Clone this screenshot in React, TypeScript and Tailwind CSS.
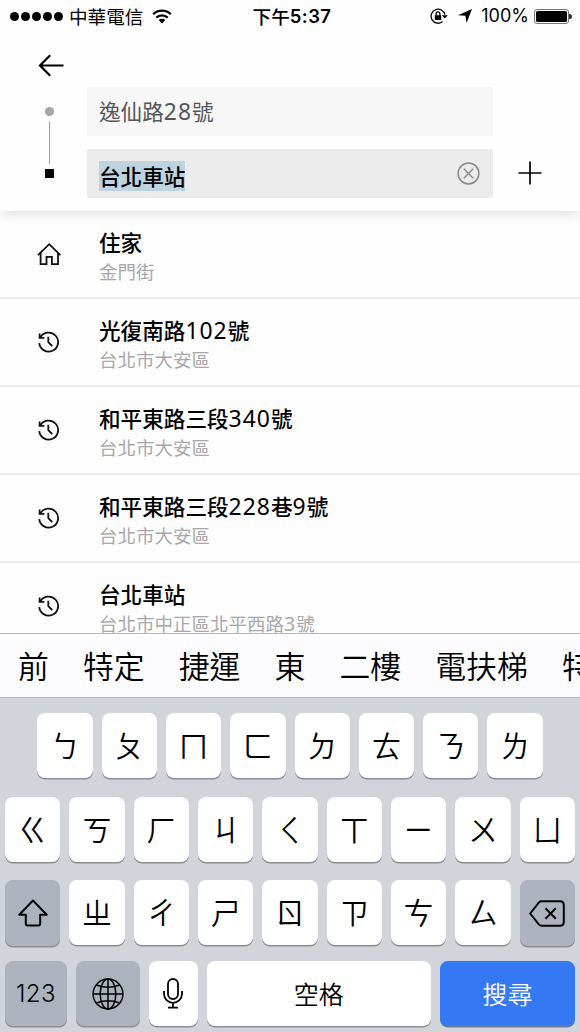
import React from 'react';

const places = [
  { icon: 'home', title: '住家', detail: '金門街' },
  { icon: 'recent', title: '光復南路102號', detail: '台北市大安區' },
  { icon: 'recent', title: '和平東路三段340號', detail: '台北市大安區' },
  { icon: 'recent', title: '和平東路三段228巷9號', detail: '台北市大安區' },
  { icon: 'recent', title: '台北車站', detail: '台北市中正區北平西路3號' },
];

const candidates = ['前', '特定', '捷運', '東', '二樓', '電扶梯', '特定'];

const firstRow = ['ㄅ', 'ㄆ', 'ㄇ', 'ㄈ', 'ㄉ', 'ㄊ', 'ㄋ', 'ㄌ'];
const secondRow = ['ㄍ', 'ㄎ', 'ㄏ', 'ㄐ', 'ㄑ', 'ㄒ', 'ㄧ', 'ㄨ', 'ㄩ'];
const thirdRow = ['ㄓ', 'ㄔ', 'ㄕ', 'ㄖ', 'ㄗ', 'ㄘ', 'ㄙ'];

// House numbers are set a little larger and looser than the characters
const Address = ({ text }: { text: string }) => (
  <>
    {text.split(/(\d+)/).map((part, i) =>
      /\d/.test(part) ? (
        <span key={i} className="font-['Noto_Sans'] text-[1.06em] font-normal tracking-[0.045em]">{part}</span>
      ) : (
        part
      )
    )}
  </>
);

const HomeIcon = () => (
  <svg className="w-6 h-6" viewBox="0 0 24 24" fill="none" stroke="#111" strokeWidth="1.8">
    <path d="M1 13.2 12.2 2.2 23.4 13.2" />
    <path d="M3.6 10.8V22.2H9.5V14.8H14.9V22.2H21V10.8" />
  </svg>
);

const RecentIcon = () => (
  <svg className="w-6 h-6" viewBox="0 0 24 24" fill="none" stroke="#111" strokeWidth="1.8">
    <path d="M3.4 7.4A9.5 9.5 0 1 1 2.2 13.2" />
    <path d="M11.3 6.8V12.2L15.2 16" />
    <path d="M2.6 3.6V7.9H7.4" />
  </svg>
);

const StatusBar = () => (
  <div className="flex items-center h-8 pl-[10px] pr-[8px] text-black">
    <div className="flex flex-1 items-center">
      <div className="flex gap-[2px]">
        {[0, 1, 2, 3, 4].map((dot) => (
          <span key={dot} className="w-[9px] h-[9px] rounded-full bg-black" />
        ))}
      </div>
      <span className="ml-[6px] text-[18.6px] leading-8">中華電信</span>
      <svg className="ml-[9px] w-[20px] h-[15px]" viewBox="0 0 20 15" fill="none" stroke="#000" strokeWidth="2.2">
        <path d="M1.2 5.2A12.6 12.6 0 0 1 18.8 5.2" />
        <path d="M4.3 8.6A8.2 8.2 0 0 1 15.7 8.6" />
        <path d="M10 14.4 6.7 11A4.7 4.7 0 0 1 13.3 11Z" fill="#000" stroke="none" />
      </svg>
    </div>
    <div className="flex items-center pl-[2px] text-[18.6px] font-medium leading-8">
      下午<span className="font-['Inter'] font-semibold text-[18.5px] tracking-[0.4px]">5:37</span>
    </div>
    <div className="flex flex-1 items-center justify-end">
      <svg className="w-[18px] h-4" viewBox="0 0 18 16" fill="none" stroke="#000" strokeWidth="1.3">
        <path d="M14.9 6.6A7 7 0 1 0 12.6 13.6" />
        <path d="M11.8 7.2H17.8L14.8 10.6Z" fill="#000" stroke="none" />
        <path d="M4.8 7.2H11.2V12H4.8Z" fill="#000" stroke="none" />
        <path d="M6.1 7.4V5.8A1.9 1.9 0 0 1 9.9 5.8V7.4" />
      </svg>
      <svg className="ml-[10px] w-[14px] h-[14px]" viewBox="0 0 14 14">
        <path d="M14 0 8.6 14 7.4 6.8 0 6.3Z" fill="#000" />
      </svg>
      <span className="ml-[9px] font-['Inter'] text-[18px] leading-8">100%</span>
      <div className="ml-[5px] w-[35px] h-[15px] rounded-[3px] border border-[#777] p-px">
        <div className="h-full rounded-[1.5px] bg-black" />
      </div>
      <span className="w-[3px] h-[5px] rounded-r bg-[#333]" />
    </div>
  </div>
);

const Key = ({ label }: { label: string }) => (
  <div className="flex w-[55.3px] h-[65px] shrink-0 items-center justify-center rounded-[8px] bg-white pb-[3px] text-[30px] font-[350] text-black shadow-[0_1.5px_0_#8b8d91]">
    {label}
  </div>
);

const Keyboard = () => (
  <div className="h-[334px] bg-[#d1d4da] pt-[15px]">
    <div className="flex justify-center gap-[9px]">
      {firstRow.map((label) => <Key key={label} label={label} />)}
    </div>
    <div className="mt-[19px] flex justify-center gap-[9px]">
      {secondRow.map((label) => <Key key={label} label={label} />)}
    </div>
    <div className="mt-[18px] flex justify-center gap-[9px]">
      <div className="flex w-[55.3px] h-[66px] items-center justify-center rounded-[8px] bg-[#acb3be] shadow-[0_1.5px_0_#8b8d91]">
        <svg className="w-[30px] h-[28px]" viewBox="0 0 30 28" fill="none" stroke="#000" strokeWidth="2" strokeLinejoin="round">
          <path d="M15 1.5 28.7 15.7H22.2V24.5Q22.2 26.5 20.2 26.5H9.8Q7.8 26.5 7.8 24.5V15.7H1.3Z" />
        </svg>
      </div>
      {thirdRow.map((label) => <Key key={label} label={label} />)}
      <div className="flex w-[55.3px] h-[66px] items-center justify-center rounded-[8px] bg-[#acb3be] shadow-[0_1.5px_0_#8b8d91]">
        <svg className="w-9 h-[27px]" viewBox="0 0 36 27" fill="none" stroke="#000" strokeWidth="2" strokeLinejoin="round">
          <path d="M12.5 1.2H31Q34.8 1.2 34.8 5V22Q34.8 25.8 31 25.8H12.5Q11 25.8 10 24.7L1.2 13.5 10 2.3Q11 1.2 12.5 1.2Z" />
          <path d="M16.5 8.3 26.8 18.7M26.8 8.3 16.5 18.7" />
        </svg>
      </div>
    </div>
    <div className="mt-[15px] flex gap-[9px] px-[5px] text-[25px] font-[350] text-black">
      <div className="flex w-[62px] h-[65px] items-center justify-center rounded-[8px] bg-[#acb3be] font-['Inter'] text-[24px] font-light tracking-[0.5px] shadow-[0_1.5px_0_#8b8d91]">
        123
      </div>
      <div className="flex w-[63.5px] h-[65px] items-center justify-center rounded-[8px] bg-[#acb3be] shadow-[0_1.5px_0_#8b8d91]">
        <svg className="w-8 h-8" viewBox="0 0 32 32" fill="none" stroke="#000" strokeWidth="1.5">
          <circle cx="16" cy="16" r="14.9" />
          <ellipse cx="16" cy="16" rx="7.8" ry="14.9" />
          <path d="M16 1V31M1 16H31M4.3 7Q16 11.6 27.7 7M4.3 25Q16 20.4 27.7 25" />
        </svg>
      </div>
      <div className="flex w-[49px] h-[65px] items-center justify-center rounded-[8px] bg-white shadow-[0_1.5px_0_#8b8d91]">
        <svg className="w-5 h-[31px]" viewBox="0 0 20 31" fill="none" stroke="#000" strokeWidth="1.8">
          <rect x="5" y="1" width="10" height="20" rx="5" />
          <path d="M1 13V15.8A9 9 0 0 0 19 15.8V13M10 25V29.6M5 29.7H15" />
        </svg>
      </div>
      <div className="flex flex-1 h-[65px] items-center justify-center rounded-[8px] bg-white shadow-[0_1.5px_0_#8b8d91]">
        空格
      </div>
      <div className="flex w-[135px] h-[65px] items-center justify-center rounded-[8px] bg-[#3478f3] text-white shadow-[0_1.5px_0_#6c7a94]">
        搜尋
      </div>
    </div>
  </div>
);

const App = () => {
  return (
    <div className="flex flex-col w-[580px] h-[1032px] overflow-hidden bg-[#fdfdfd] font-['Noto_Sans_CJK_TC',sans-serif]">
      <header className="relative z-10 h-[211px] shrink-0 bg-[#fefefe] shadow-[0_3px_12px_rgba(0,0,0,0.12)]">
        <StatusBar />
        <div className="flex h-[55px] pl-[38px] pt-[22px]">
          <svg className="w-[26px] h-[23px]" viewBox="0 0 26 23" fill="none" stroke="#000" strokeWidth="2.2">
            <path d="M12.2 1.2 2 11.5 12.2 21.8M1.5 11.5H25.5" />
          </svg>
        </div>
        <div className="flex">
          <div className="flex w-[87px] flex-col items-center pl-3 pt-5">
            <span className="w-[9px] h-[9px] rounded-full bg-[#a5a5a7]" />
            <span className="mt-[5px] w-[1.5px] h-[43px] bg-[#a5a5a7]" />
            <span className="mt-[5px] w-[9px] h-[9px] bg-black" />
          </div>
          <div className="flex w-[406px] flex-col gap-[13px]">
            <div className="flex h-[49px] items-center rounded-[2px] bg-[#f7f7f7] pl-3 text-[21.6px] leading-[30px] text-[#55565c]">
              <span><Address text="逸仙路28號" /></span>
            </div>
            <div className="flex h-[49px] items-center justify-between rounded-[3px] bg-[#ebebeb] pl-3 pr-[13px]">
              <span className="mt-[5px] h-[30px] bg-[#bdd3df] text-[21.6px] leading-[29px] font-medium text-black">台北車站</span>
              <svg className="w-[23px] h-[23px]" viewBox="0 0 23 23" fill="none" stroke="#8c8c8e" strokeWidth="1.5">
                <circle cx="11.5" cy="11.5" r="10.4" />
                <path d="M6.8 6.8 16.2 16.2M16.2 6.8 6.8 16.2" />
              </svg>
            </div>
          </div>
          <svg className="ml-[25px] mt-[74px] w-6 h-6" viewBox="0 0 24 24" stroke="#000" strokeWidth="1.7">
            <path d="M12 .5V23.5M.5 12H23.5" />
          </svg>
        </div>
      </header>

      <main className="h-[422px] shrink-0 overflow-hidden">
        {places.map((place, i) => (
          <div key={i} className="flex h-[88.1px] border-b-2 border-[#ececed]">
            <div className="flex w-[99px] items-center pl-[37px]">
              {place.icon === 'home' ? <HomeIcon /> : <RecentIcon />}
            </div>
            <div className="pt-[16px]">
              <p className="h-[30px] whitespace-nowrap text-[21.6px] leading-[30px] font-medium text-black">
                <Address text={place.title} />
              </p>
              <p className="h-7 whitespace-nowrap text-[18.5px] leading-7 text-[#a8a8ac]">
                <Address text={place.detail} />
              </p>
            </div>
          </div>
        ))}
      </main>

      <div className="flex h-[65px] shrink-0 items-center gap-[34px] overflow-hidden border-y border-[#b4b6bb] bg-[#fcfcfe] pl-[18px] text-[30.9px] font-[350] text-black">
        {candidates.map((word, i) => (
          <span key={i} className="shrink-0">{word}</span>
        ))}
      </div>
      <Keyboard />
    </div>
  );
};

export default App;
